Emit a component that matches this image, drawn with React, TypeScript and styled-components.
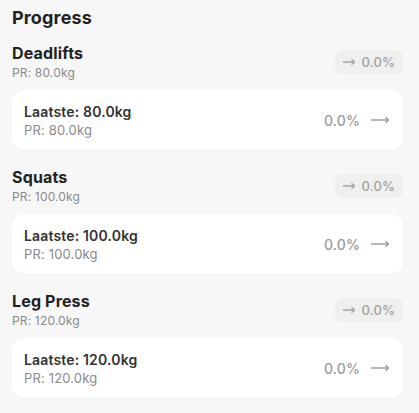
import React from "react";
import styled, { createGlobalStyle } from "styled-components";

const Global = createGlobalStyle`
  html, body { margin: 0; padding: 0; background: #f7f7f7; }
  body { font-family: Inter, "Noto Sans", "Liberation Sans", sans-serif; color: #222; letter-spacing: 0.01em; }
`;

const Page = styled.div`
  padding: 6px 16px 0 12px;
  display: flex;
  flex-direction: column;
`;

const Title = styled.h1`
  margin: 0 0 13px;
  font-size: 18px;
  line-height: 24px;
  font-weight: 700;
  color: #222;
`;

const Section = styled.section`
  display: flex;
  flex-direction: column;
  gap: 8px;
  margin-bottom: 17px;
`;

const Header = styled.div`
  display: flex;
  align-items: center;
  justify-content: space-between;
`;

const HeaderText = styled.div`
  display: flex;
  flex-direction: column;
  gap: 2px;
`;

const Name = styled.div`
  font-size: 16px;
  line-height: 20px;
  font-weight: 700;
  color: #222;
`;

const Sub = styled.div<{ $size?: number }>`
  font-size: ${(p) => p.$size ?? 12}px;
  line-height: ${(p) => (p.$size ?? 12) + 4.5}px;
  color: #8a8a8a;
`;

const Badge = styled.div`
  display: flex;
  align-items: center;
  gap: 6px;
  height: 24px;
  padding: 0 8px;
  border-radius: 7px;
  background: #efefef;
  color: #a2a2a2;
  font-size: 13px;
  font-weight: 500;
`;

const Card = styled.div`
  background: #fff;
  border-radius: 12px;
  padding: 12px 14px 11px 12px;
  display: flex;
  align-items: center;
  justify-content: space-between;
  box-shadow: 0 1px 2px rgba(0, 0, 0, 0.03);
`;

const CardText = styled.div`
  display: flex;
  flex-direction: column;
`;

const Latest = styled.div`
  font-size: 14px;
  line-height: 20px;
  font-weight: 600;
  color: #333;
`;

const Change = styled.div`
  display: flex;
  align-items: center;
  gap: 11px;
  color: #9a9a9a;
  font-size: 14px;
  font-weight: 500;
`;

const Arrow = ({ w }: { w: number }) => (
  <svg width={w} height="8" viewBox={`0 0 ${w} 8`} fill="none">
    <line x1="0" y1="4" x2={w - 0.8} y2="4" stroke="currentColor" strokeWidth="1.4" />
    <path d={`M${w - 3.5} 1.2 L${w - 0.5} 4 L${w - 3.5} 6.8`} stroke="currentColor" strokeWidth="1.3" fill="none" />
  </svg>
);

const data = [
  { name: "Deadlifts", pr: "80.0kg", last: "80.0kg" },
  { name: "Squats", pr: "100.0kg", last: "100.0kg" },
  { name: "Leg Press", pr: "120.0kg", last: "120.0kg" },
];

export default function App() {
  return (
    <>
      <Global />
      <Page>
        <Title>Progress</Title>
        {data.map((d) => (
          <Section key={d.name}>
            <Header>
              <HeaderText>
                <Name>{d.name}</Name>
                <Sub>PR: {d.pr}</Sub>
              </HeaderText>
              <Badge>
                <Arrow w={12} />
                0.0%
              </Badge>
            </Header>
            <Card>
              <CardText>
                <Latest>Laatste: {d.last}</Latest>
                <Sub $size={13}>PR: {d.pr}</Sub>
              </CardText>
              <Change>
                0.0%
                <Arrow w={18} />
              </Change>
            </Card>
          </Section>
        ))}
      </Page>
    </>
  );
}
